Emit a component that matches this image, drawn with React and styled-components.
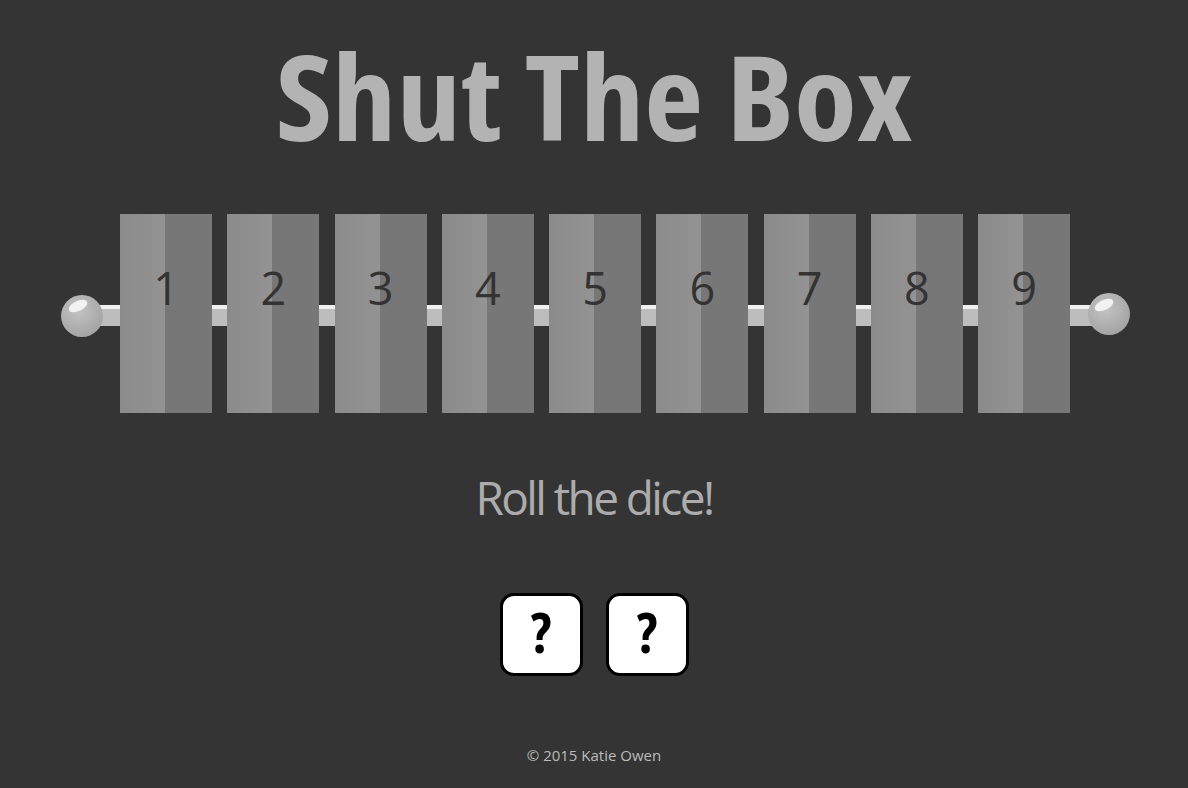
import React from "react";
import styled, { createGlobalStyle } from "styled-components";

const GlobalStyle = createGlobalStyle`
  html, body {
    margin: 0;
    padding: 0;
    background: #343434;
  }
  body {
    font-family: "Open Sans", "Noto Sans", sans-serif;
  }
`;

const Page = styled.div`
  width: 1188px;
  height: 788px;
  display: flex;
  flex-direction: column;
  align-items: center;
  background: #343434;
`;

const Title = styled.h1`
  margin: 31px 0 0;
  font-size: 118px;
  line-height: 130px;
  font-weight: 700;
  font-stretch: 75%;
  letter-spacing: 0;
  transform: scaleX(1.09);
  color: #b3b3b3;
`;

const Board = styled.div`
  position: relative;
  margin-top: 53px;
  width: 1070px;
  display: flex;
  justify-content: center;
`;

const Rod = styled.svg`
  position: absolute;
  left: 1px;
  top: 66px;
  z-index: 0;
`;

const Tiles = styled.div`
  position: relative;
  z-index: 1;
  width: 950px;
  margin-left: 2px;
  display: flex;
  justify-content: space-between;
`;

const Tile = styled.div`
  width: 92px;
  height: 199px;
  display: flex;
  justify-content: center;
  padding-top: 48px;
  box-sizing: border-box;
  background: linear-gradient(
    to right,
    #8b8b8b 0%,
    #939393 49%,
    #777777 49%,
    #777777 100%
  );
  color: #333;
  font-size: 45px;
  line-height: 52px;
`;

const Message = styled.p`
  margin: 56px 0 0;
  font-size: 46px;
  line-height: 56px;
  letter-spacing: -2.6px;
  color: #acacac;
`;

const Dice = styled.div`
  margin-top: 68px;
  display: flex;
  gap: 23px;
`;

const Die = styled.div`
  width: 83px;
  height: 83px;
  box-sizing: border-box;
  border: 3px solid #000;
  border-radius: 14px;
  background: #fff;
  display: flex;
  align-items: center;
  justify-content: center;
  font-size: 56px;
  font-weight: 700;
  font-stretch: 75%;
  color: #000;
  padding-bottom: 8px;
`;

const Footer = styled.footer`
  margin-top: 69px;
  font-size: 15px;
  font-weight: 500;
  color: #bbbbbb;
`;

const RodDrawing = () => (
  <Rod width="1100" height="60" viewBox="0 0 1100 60">
    <defs>
      <radialGradient id="knob" cx="40%" cy="35%" r="70%">
        <stop offset="0%" stopColor="#c4c4c4" />
        <stop offset="100%" stopColor="#a2a2a2" />
      </radialGradient>
    </defs>
    <rect x="22" y="25" width="1030" height="21" fill="#bdbdbd" />
    <rect x="22" y="25" width="1030" height="4" fill="#f0f0f0" />
    <circle cx="22" cy="36" r="21" fill="url(#knob)" />
    <ellipse cx="18" cy="26" rx="10" ry="5" fill="#f2f2f2" transform="rotate(-25 18 26)" />
    <circle cx="1049" cy="34" r="21" fill="url(#knob)" />
    <ellipse cx="1044" cy="25" rx="10" ry="5" fill="#f2f2f2" transform="rotate(-25 1044 25)" />
  </Rod>
);

export default function App() {
  const numbers = [1, 2, 3, 4, 5, 6, 7, 8, 9];
  return (
    <Page>
      <GlobalStyle />
      <Title>Shut The Box</Title>
      <Board>
        <RodDrawing />
        <Tiles>
          {numbers.map((n) => (
            <Tile key={n}>{n}</Tile>
          ))}
        </Tiles>
      </Board>
      <Message>Roll the dice!</Message>
      <Dice>
        <Die>?</Die>
        <Die>?</Die>
      </Dice>
      <Footer>© 2015 Katie Owen</Footer>
    </Page>
  );
}
